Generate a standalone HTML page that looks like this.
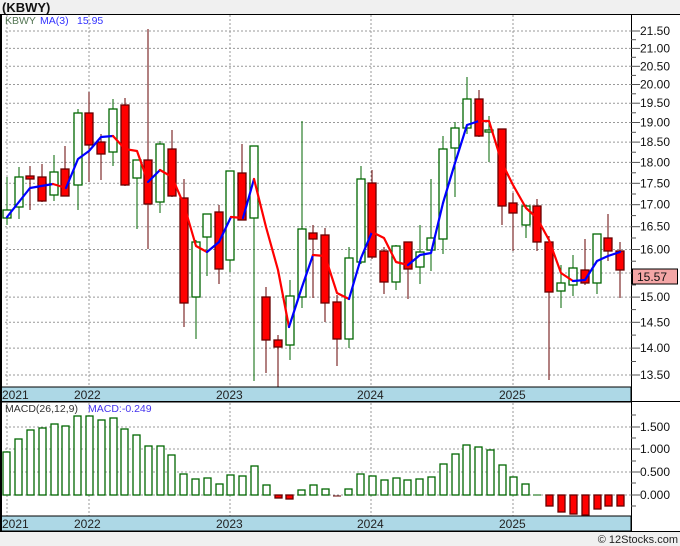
<!DOCTYPE html>
<html><head><meta charset="utf-8"><style>
html,body{margin:0;padding:0;background:#f0f0f0;}
svg{display:block;font-family:"Liberation Sans",sans-serif;}
.g line{stroke:#006600;stroke-width:1}
.g rect{fill:#fff;stroke:#006600;stroke-width:1.3}
.r line{stroke:#660000;stroke-width:1}
.r rect{fill:#ff0000;stroke:#660000;stroke-width:1.3}
.grid line{stroke:#999;stroke-width:1;stroke-dasharray:2,2}
.ax text{font-size:12px;fill:#111}
</style></head><body>
<svg width="680" height="546" viewBox="0 0 680 546" xmlns="http://www.w3.org/2000/svg">
<rect x="0" y="0" width="680" height="546" fill="#f0f0f0"/>
<text x="2" y="12" font-size="13" font-weight="bold" fill="#111">(KBWY)</text>
<rect x="1" y="14" width="679" height="517" fill="#fff"/>
<g class="grid">
<line x1="5" x2="631" y1="31" y2="31"/><line x1="5" x2="631" y1="48.4" y2="48.4"/><line x1="5" x2="631" y1="66.3" y2="66.3"/><line x1="5" x2="631" y1="84.5" y2="84.5"/><line x1="5" x2="631" y1="103.2" y2="103.2"/><line x1="5" x2="631" y1="122.5" y2="122.5"/><line x1="5" x2="631" y1="142.1" y2="142.1"/><line x1="5" x2="631" y1="162.4" y2="162.4"/><line x1="5" x2="631" y1="183.3" y2="183.3"/><line x1="5" x2="631" y1="204.7" y2="204.7"/><line x1="5" x2="631" y1="226.7" y2="226.7"/><line x1="5" x2="631" y1="249.5" y2="249.5"/><line x1="5" x2="631" y1="273" y2="273"/><line x1="5" x2="631" y1="297.1" y2="297.1"/><line x1="5" x2="631" y1="322.3" y2="322.3"/><line x1="5" x2="631" y1="348.1" y2="348.1"/><line x1="5" x2="631" y1="375" y2="375"/>
<line x1="5" x2="631" y1="427" y2="427"/><line x1="5" x2="631" y1="449" y2="449"/><line x1="5" x2="631" y1="472" y2="472"/><line x1="5" x2="631" y1="495" y2="495"/>
<line x1="7" x2="7" y1="15" y2="531"/><line x1="89" x2="89" y1="15" y2="531"/><line x1="230" x2="230" y1="15" y2="531"/><line x1="371" x2="371" y1="15" y2="531"/><line x1="513" x2="513" y1="15" y2="531"/>
</g>
<g class="g"><line x1="7" y1="177" x2="7" y2="225"/><rect x="3" y="210" width="8" height="8"/></g>
<g class="g"><line x1="19" y1="167" x2="19" y2="219"/><rect x="15" y="177" width="8" height="30"/></g>
<g class="r"><line x1="30" y1="166" x2="30" y2="210"/><rect x="26" y="176" width="8" height="3"/></g>
<g class="r"><line x1="42" y1="164" x2="42" y2="202"/><rect x="38" y="177" width="8" height="24"/></g>
<g class="g"><line x1="54" y1="155" x2="54" y2="201"/><rect x="50" y="172" width="8" height="23"/></g>
<g class="r"><line x1="65" y1="146" x2="65" y2="196"/><rect x="61" y="169" width="8" height="27"/></g>
<g class="g"><line x1="78" y1="109" x2="78" y2="210"/><rect x="74" y="113" width="8" height="72"/></g>
<g class="r"><line x1="89" y1="92" x2="89" y2="182"/><rect x="85" y="113" width="8" height="32"/></g>
<g class="r"><line x1="101" y1="134" x2="101" y2="180"/><rect x="97" y="142" width="8" height="12"/></g>
<g class="g"><line x1="113" y1="99" x2="113" y2="166"/><rect x="109" y="109" width="8" height="43"/></g>
<g class="r"><line x1="125" y1="98" x2="125" y2="186"/><rect x="121" y="105" width="8" height="80"/></g>
<g class="g"><line x1="137" y1="160" x2="137" y2="229"/><rect x="133" y="160" width="8" height="18"/></g>
<g class="r"><line x1="148" y1="29" x2="148" y2="249"/><rect x="144" y="160" width="8" height="44"/></g>
<g class="g"><line x1="160" y1="141" x2="160" y2="213"/><rect x="156" y="144" width="8" height="58"/></g>
<g class="r"><line x1="172" y1="130" x2="172" y2="197"/><rect x="168" y="149" width="8" height="47"/></g>
<g class="r"><line x1="184" y1="179" x2="184" y2="327"/><rect x="180" y="198" width="8" height="105"/></g>
<g class="g"><line x1="196" y1="240" x2="196" y2="339"/><rect x="192" y="242" width="8" height="55"/></g>
<g class="g"><line x1="207" y1="214" x2="207" y2="276"/><rect x="203" y="214" width="8" height="23"/></g>
<g class="r"><line x1="219" y1="205" x2="219" y2="284"/><rect x="215" y="212" width="8" height="57"/></g>
<g class="g"><line x1="230" y1="171" x2="230" y2="272"/><rect x="226" y="171" width="8" height="89"/></g>
<g class="r"><line x1="242" y1="144" x2="242" y2="220"/><rect x="238" y="173" width="8" height="47"/></g>
<g class="g"><line x1="254" y1="146" x2="254" y2="381"/><rect x="250" y="146" width="8" height="72"/></g>
<g class="r"><line x1="266" y1="287" x2="266" y2="373"/><rect x="262" y="297" width="8" height="43"/></g>
<g class="r"><line x1="278" y1="335" x2="278" y2="387"/><rect x="274" y="340" width="8" height="7"/></g>
<g class="g"><line x1="290" y1="280" x2="290" y2="360"/><rect x="286" y="296" width="8" height="49"/></g>
<g class="g"><line x1="302" y1="121" x2="302" y2="308"/><rect x="298" y="229" width="8" height="68"/></g>
<g class="r"><line x1="313" y1="225" x2="313" y2="298"/><rect x="309" y="233" width="8" height="6"/></g>
<g class="r"><line x1="325" y1="228" x2="325" y2="322"/><rect x="321" y="235" width="8" height="68"/></g>
<g class="r"><line x1="337" y1="295" x2="337" y2="366"/><rect x="333" y="302" width="8" height="37"/></g>
<g class="g"><line x1="349" y1="247" x2="349" y2="348"/><rect x="345" y="258" width="8" height="81"/></g>
<g class="g"><line x1="361" y1="166" x2="361" y2="264"/><rect x="357" y="179" width="8" height="83"/></g>
<g class="r"><line x1="372" y1="170" x2="372" y2="259"/><rect x="368" y="183" width="8" height="74"/></g>
<g class="r"><line x1="384" y1="247" x2="384" y2="294"/><rect x="380" y="251" width="8" height="31"/></g>
<g class="g"><line x1="396" y1="245" x2="396" y2="290"/><rect x="392" y="246" width="8" height="36"/></g>
<g class="r"><line x1="408" y1="242" x2="408" y2="299"/><rect x="404" y="242" width="8" height="27"/></g>
<g class="g"><line x1="420" y1="225" x2="420" y2="284"/><rect x="416" y="252" width="8" height="15"/></g>
<g class="g"><line x1="431" y1="179" x2="431" y2="271"/><rect x="427" y="238" width="8" height="12"/></g>
<g class="g"><line x1="443" y1="136" x2="443" y2="254"/><rect x="439" y="149" width="8" height="90"/></g>
<g class="g"><line x1="455" y1="122" x2="455" y2="197"/><rect x="451" y="128" width="8" height="20"/></g>
<g class="g"><line x1="467" y1="77" x2="467" y2="134"/><rect x="463" y="99" width="8" height="29"/></g>
<g class="r"><line x1="479" y1="90" x2="479" y2="137"/><rect x="475" y="99" width="8" height="37"/></g>
<g class="g"><line x1="489" y1="116" x2="489" y2="162"/><rect x="485" y="130" width="8" height="2"/></g>
<g class="r"><line x1="502" y1="129" x2="502" y2="225"/><rect x="498" y="129" width="8" height="77"/></g>
<g class="r"><line x1="513" y1="193" x2="513" y2="251"/><rect x="509" y="203" width="8" height="10"/></g>
<g class="g"><line x1="526" y1="205" x2="526" y2="238"/><rect x="522" y="206" width="8" height="19"/></g>
<g class="r"><line x1="537" y1="199" x2="537" y2="251"/><rect x="533" y="206" width="8" height="36"/></g>
<g class="r"><line x1="549" y1="236" x2="549" y2="380"/><rect x="545" y="242" width="8" height="50"/></g>
<g class="g"><line x1="561" y1="265" x2="561" y2="308"/><rect x="557" y="283" width="8" height="8"/></g>
<g class="g"><line x1="573" y1="255" x2="573" y2="296"/><rect x="569" y="268" width="8" height="17"/></g>
<g class="r"><line x1="585" y1="239" x2="585" y2="285"/><rect x="581" y="270" width="8" height="13"/></g>
<g class="g"><line x1="597" y1="234" x2="597" y2="294"/><rect x="593" y="234" width="8" height="49"/></g>
<g class="r"><line x1="608" y1="214" x2="608" y2="261"/><rect x="604" y="238" width="8" height="13"/></g>
<g class="r"><line x1="620" y1="242" x2="620" y2="298"/><rect x="616" y="251" width="8" height="19"/></g>
<g fill="none" stroke-width="2.2" stroke-linejoin="round" stroke-linecap="round">
<polyline stroke="#0000ff" points="7,217 30,188 53,184"/>
<polyline stroke="#ff0000" points="53,184 66,188"/>
<polyline stroke="#0000ff" points="66,188 78,159 89,151 101,137 113,136"/>
<polyline stroke="#ff0000" points="113,136 125,149 137,151 148,182"/>
<polyline stroke="#0000ff" points="148,182 160,170"/>
<polyline stroke="#ff0000" points="160,170 172,177 184,205 196,246 207,252"/>
<polyline stroke="#0000ff" points="207,252 219,242 231,217"/>
<polyline stroke="#ff0000" points="231,217 243,218"/>
<polyline stroke="#0000ff" points="243,218 254,179"/>
<polyline stroke="#ff0000" points="254,179 266,227 278,270 289,327"/>
<polyline stroke="#0000ff" points="289,327 302,287 313,255"/>
<polyline stroke="#ff0000" points="313,255 325,256 337,293 349,299"/>
<polyline stroke="#0000ff" points="349,299 361,258 372,232"/>
<polyline stroke="#ff0000" points="372,232 384,238 396,262 408,265"/>
<polyline stroke="#0000ff" points="408,265 420,255 431,253 443,203 455,163 467,125 479,121"/>
<polyline stroke="#ff0000" points="479,121 489,121 502,163 513,185 526,208 537,218 549,240 561,273 573,281"/>
<polyline stroke="#0000ff" points="573,281 585,280 597,261 608,256 620,252"/>
</g>
<text x="5" y="24" font-size="10.5" fill="#557755">KBWY</text>
<text x="40" y="24" font-size="10.5" fill="#3333ff">MA(3)</text>
<text x="77" y="24" font-size="10.5" fill="#3333ff">15.95</text>
<rect x="0" y="387" width="631" height="15" fill="#add8e6" stroke="#000" stroke-width="1"/>
<rect x="0" y="516" width="631" height="15" fill="#add8e6" stroke="#000" stroke-width="1"/>
<g font-size="12" fill="#222">
<text x="2" y="399">2021</text><text x="74" y="399">2022</text><text x="216" y="399">2023</text><text x="357" y="399">2024</text><text x="499" y="399">2025</text>
<text x="2" y="528">2021</text><text x="74" y="528">2022</text><text x="216" y="528">2023</text><text x="357" y="528">2024</text><text x="499" y="528">2025</text>
</g>
<g class="g">
<rect x="3" y="452" width="7" height="43"/><rect x="15" y="439" width="7" height="56"/><rect x="27" y="430" width="7" height="65"/><rect x="39" y="428" width="7" height="67"/><rect x="51" y="424" width="7" height="71"/><rect x="62" y="426" width="7" height="69"/><rect x="74" y="416" width="7" height="79"/><rect x="86" y="416" width="7" height="79"/><rect x="98" y="420" width="7" height="75"/><rect x="110" y="418" width="7" height="77"/><rect x="121" y="429" width="7" height="66"/><rect x="133" y="435" width="7" height="60"/><rect x="145" y="446" width="7" height="49"/><rect x="157" y="446" width="7" height="49"/><rect x="168" y="455" width="7" height="40"/><rect x="180" y="474" width="7" height="21"/><rect x="192" y="479" width="7" height="16"/><rect x="204" y="478" width="7" height="17"/><rect x="216" y="484" width="7" height="11"/><rect x="227" y="475" width="7" height="20"/><rect x="239" y="476" width="7" height="19"/><rect x="251" y="466" width="7" height="29"/><rect x="263" y="485" width="7" height="10"/>
<rect x="298" y="490" width="7" height="5"/><rect x="310" y="485" width="7" height="10"/><rect x="322" y="489" width="7" height="6"/>
<rect x="345" y="489" width="7" height="6"/><rect x="357" y="474" width="7" height="21"/><rect x="369" y="476" width="7" height="19"/><rect x="381" y="480" width="7" height="15"/><rect x="393" y="478" width="7" height="17"/><rect x="404" y="480" width="7" height="15"/><rect x="416" y="479" width="7" height="16"/><rect x="428" y="477" width="7" height="18"/><rect x="440" y="464" width="7" height="31"/><rect x="452" y="454" width="7" height="41"/><rect x="463" y="445" width="7" height="50"/><rect x="475" y="447" width="7" height="48"/><rect x="487" y="450" width="7" height="45"/><rect x="499" y="465" width="7" height="30"/><rect x="510" y="477" width="7" height="18"/><rect x="522" y="484" width="7" height="11"/>
<line x1="533" y1="495" x2="541" y2="495" stroke-width="2"/>
</g>
<g class="r">
<rect x="275" y="495" width="7" height="3"/><rect x="286" y="495" width="7" height="4"/>
<line x1="333" y1="496" x2="341" y2="496" stroke-width="2"/>
<rect x="546" y="495" width="7" height="11"/><rect x="558" y="495" width="7" height="17"/><rect x="570" y="495" width="7" height="19"/><rect x="582" y="495" width="7" height="20"/><rect x="594" y="495" width="7" height="14"/><rect x="605" y="495" width="7" height="11"/><rect x="617" y="495" width="7" height="11"/>
</g>
<text x="5" y="412" font-size="10.5" fill="#333">MACD(26,12,9)</text>
<text x="88" y="412" font-size="10.5" fill="#4433ee">MACD:-0.249</text>
<line x1="0" y1="14.5" x2="680" y2="14.5" stroke="#000"/>
<line x1="0" y1="401.5" x2="680" y2="401.5" stroke="#000"/>
<line x1="0" y1="531.5" x2="680" y2="531.5" stroke="#000"/>
<line x1="1" y1="14" x2="1" y2="531" stroke="#000" stroke-width="2"/>
<line x1="631.5" y1="14" x2="631.5" y2="531" stroke="#000"/>
<g stroke="#555">
<line x1="631" x2="640" y1="31" y2="31"/><line x1="631" x2="640" y1="48.4" y2="48.4"/><line x1="631" x2="640" y1="66.3" y2="66.3"/><line x1="631" x2="640" y1="84.5" y2="84.5"/><line x1="631" x2="640" y1="103.2" y2="103.2"/><line x1="631" x2="640" y1="122.5" y2="122.5"/><line x1="631" x2="640" y1="142.1" y2="142.1"/><line x1="631" x2="640" y1="162.4" y2="162.4"/><line x1="631" x2="640" y1="183.3" y2="183.3"/><line x1="631" x2="640" y1="204.7" y2="204.7"/><line x1="631" x2="640" y1="226.7" y2="226.7"/><line x1="631" x2="640" y1="249.5" y2="249.5"/><line x1="631" x2="640" y1="273" y2="273"/><line x1="631" x2="640" y1="297.1" y2="297.1"/><line x1="631" x2="640" y1="322.3" y2="322.3"/><line x1="631" x2="640" y1="348.1" y2="348.1"/><line x1="631" x2="640" y1="375" y2="375"/>
<line x1="631" x2="636" y1="39.7" y2="39.7"/><line x1="631" x2="636" y1="57.3" y2="57.3"/><line x1="631" x2="636" y1="75.4" y2="75.4"/><line x1="631" x2="636" y1="93.8" y2="93.8"/><line x1="631" x2="636" y1="112.8" y2="112.8"/><line x1="631" x2="636" y1="132.3" y2="132.3"/><line x1="631" x2="636" y1="152.2" y2="152.2"/><line x1="631" x2="636" y1="172.8" y2="172.8"/><line x1="631" x2="636" y1="194" y2="194"/><line x1="631" x2="636" y1="215.6" y2="215.6"/><line x1="631" x2="636" y1="238" y2="238"/><line x1="631" x2="636" y1="261.2" y2="261.2"/><line x1="631" x2="636" y1="285" y2="285"/><line x1="631" x2="636" y1="309.6" y2="309.6"/><line x1="631" x2="636" y1="335.1" y2="335.1"/><line x1="631" x2="636" y1="361.5" y2="361.5"/>
<line x1="631" x2="640" y1="427" y2="427"/><line x1="631" x2="640" y1="449" y2="449"/><line x1="631" x2="640" y1="472" y2="472"/><line x1="631" x2="640" y1="495" y2="495"/>
<line x1="631" x2="636" y1="415" y2="415"/><line x1="631" x2="636" y1="438" y2="438"/><line x1="631" x2="636" y1="461" y2="461"/><line x1="631" x2="636" y1="483" y2="483"/><line x1="631" x2="636" y1="506" y2="506"/>
</g>
<g class="ax">
<text x="640" y="35">21.50</text><text x="640" y="52.4">21.00</text><text x="640" y="70.3">20.50</text><text x="640" y="88.5">20.00</text><text x="640" y="107.2">19.50</text><text x="640" y="126.5">19.00</text><text x="640" y="146.1">18.50</text><text x="640" y="166.4">18.00</text><text x="640" y="187.3">17.50</text><text x="640" y="208.7">17.00</text><text x="640" y="230.7">16.50</text><text x="640" y="253.5">16.00</text><text x="640" y="301.1">15.00</text><text x="640" y="326.3">14.50</text><text x="640" y="352.1">14.00</text><text x="640" y="379">13.50</text>
<text x="640" y="431">1.500</text><text x="640" y="453">1.000</text><text x="640" y="476">0.500</text><text x="640" y="499">0.000</text>
</g>
<rect x="632.5" y="269" width="45" height="15" fill="#f4a6a6" stroke="#000"/>
<text x="637" y="281" font-size="12" fill="#111">15.57</text>
<text x="678" y="543" font-size="11" fill="#222" text-anchor="end">© 12Stocks.com</text>
</svg>
</body></html>
